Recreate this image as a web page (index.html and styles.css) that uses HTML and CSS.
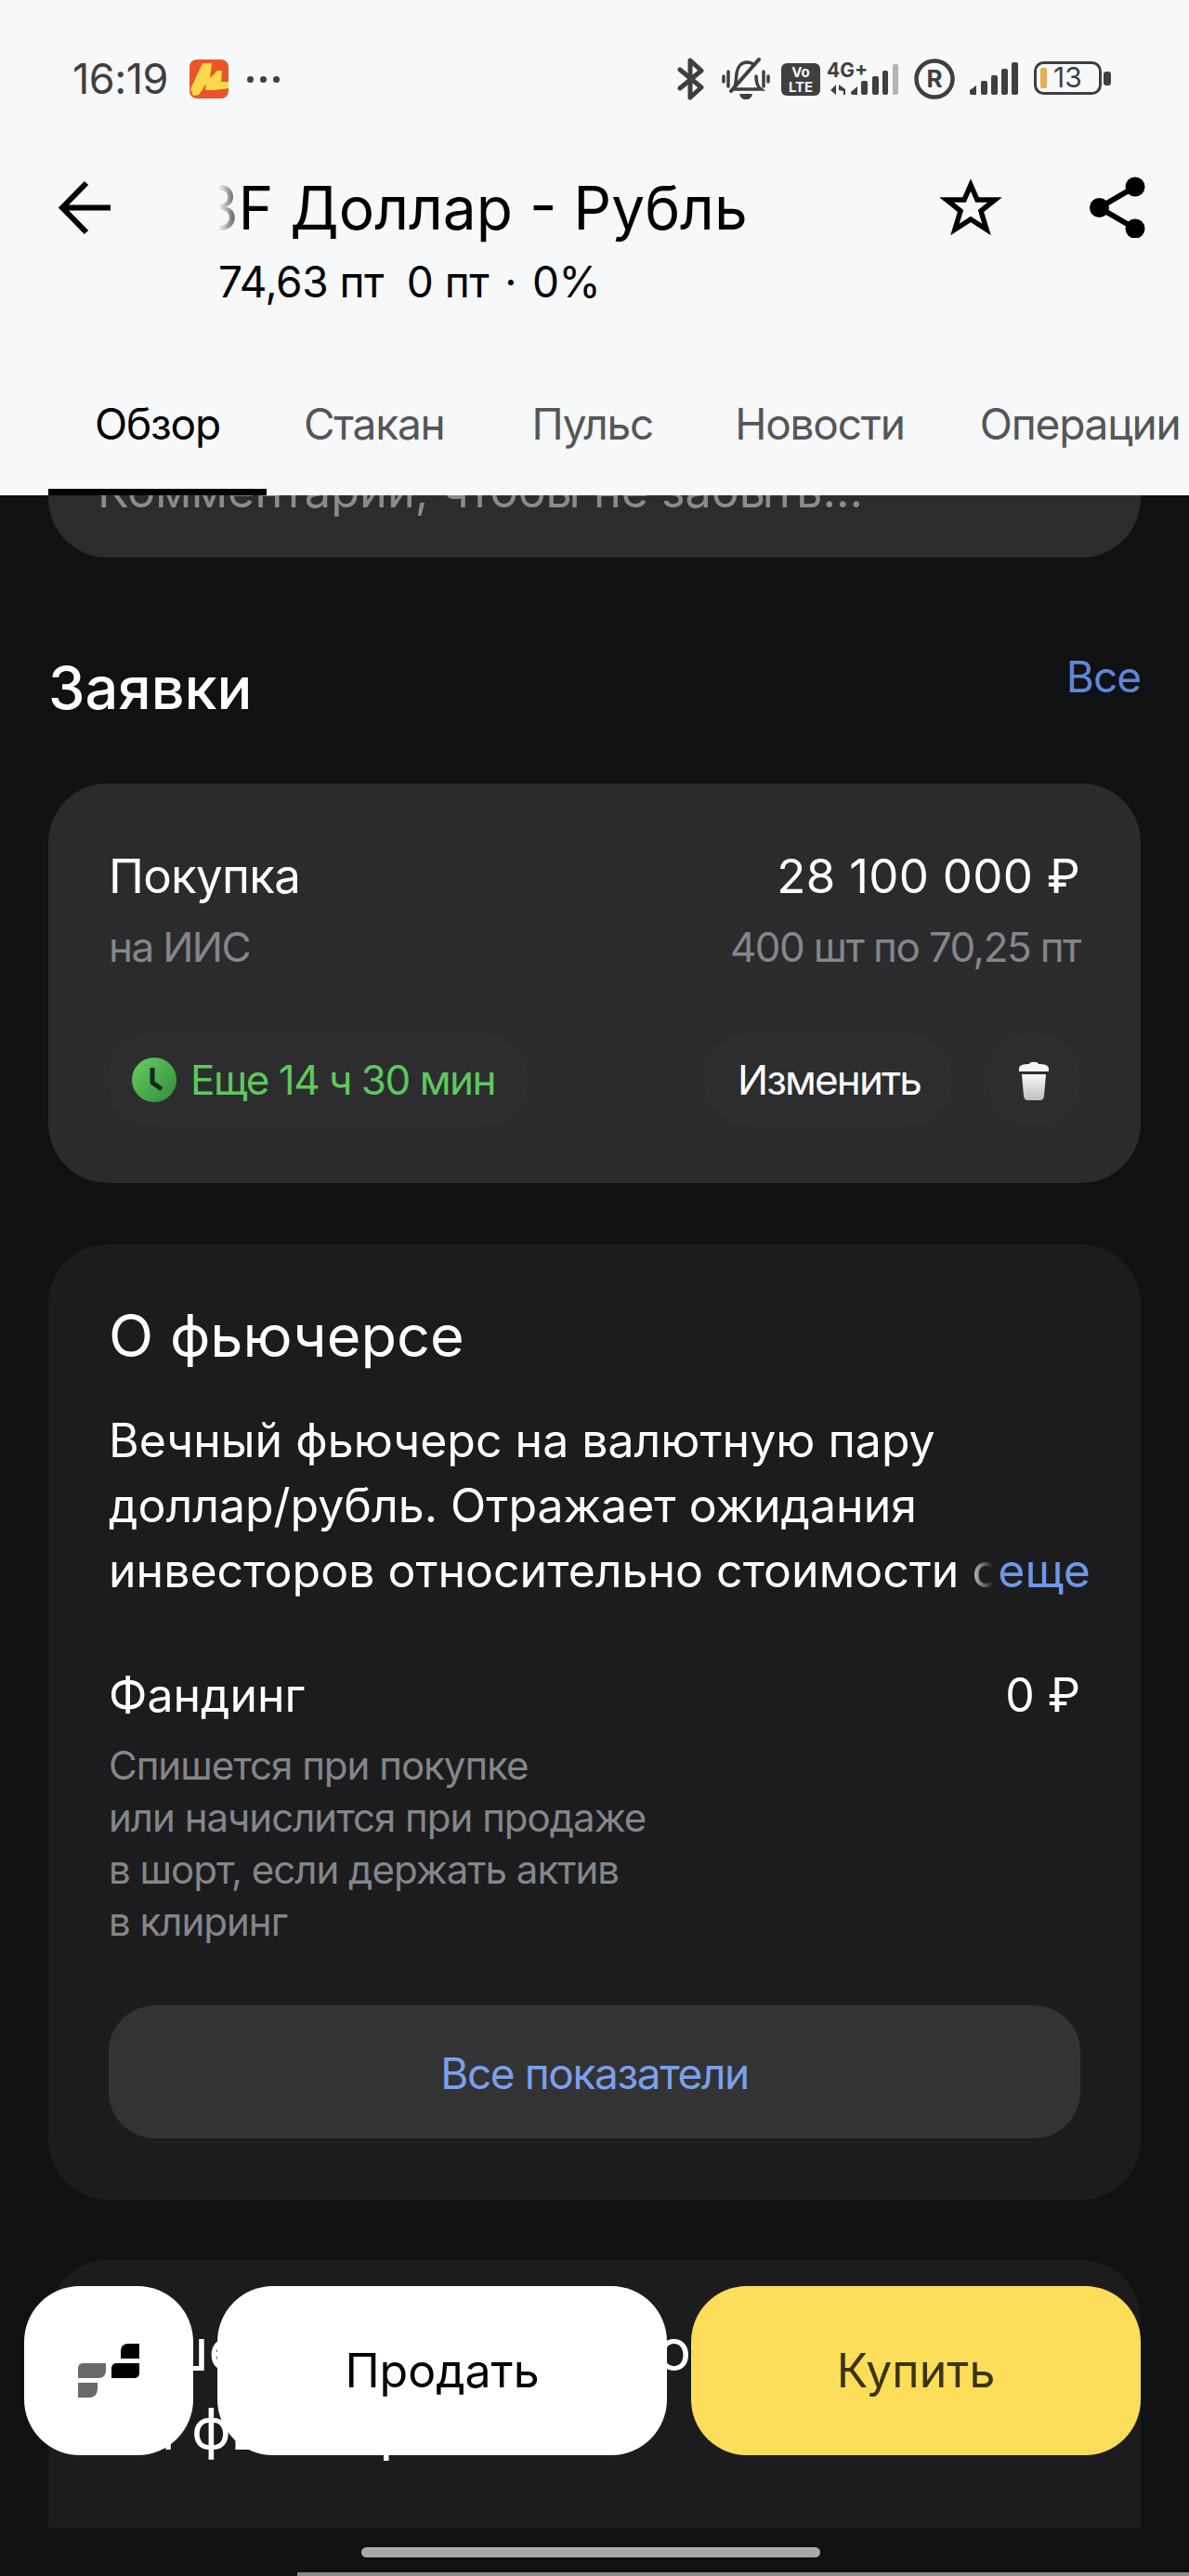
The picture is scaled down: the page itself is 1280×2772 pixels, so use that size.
FILE: index.html
```html
<!DOCTYPE html>
<html lang="ru">
<head>
<meta charset="utf-8">
<title>Доллар – Рубль</title>
<link rel="stylesheet" href="styles.css">
</head>
<body>
<div class="page">
  <header class="header">
    <div class="status">
      <span class="time">16:19</span>
      <svg class="market" width="42" height="42" viewBox="0 0 42 42"><rect width="42" height="42" rx="8" fill="#e9552a"/><path d="M1 32L14 4H24L22 20L30 12H35L34 24H42V31L27 33H17L18 26L10 38L4 39Z" fill="#fcd94a"/></svg>
      <span class="dots"><i></i><i></i><i></i></span>
      <div class="status-right">
        <svg class="i-bt" width="30" height="46" viewBox="0 0 30 46"><path d="M3 13 L26 32 L14 43 V3 L26 14 L3 33" fill="none" stroke="#3f3f3f" stroke-width="5" stroke-linejoin="round" stroke-linecap="round"/></svg>
        <svg class="i-bell" width="52" height="46" viewBox="0 0 52 46"><g fill="none" stroke="#3f3f3f" stroke-linecap="round" stroke-width="3.5"><path d="M2 20v6M7 15v16M45 15v16M50 20v6"/><path d="M12 34c4-4 3-10 4-17 1-7 5-12 11-12 4 0 6 1 8 3M37 20c0 5 1 11 5 14H12"/><path d="M10 36L40 2" stroke-width="4"/></g><path d="M19 39h14c-1 4-3 6-7 6s-6-2-7-6z" fill="#3f3f3f"/></svg>
        <svg class="i-volte" width="42" height="35" viewBox="0 0 42 35"><rect width="42" height="35" rx="6" fill="#3f3f3f"/><text x="21" y="15" class="t-vo">Vo</text><text x="21" y="31" class="t-vo">LTE</text></svg>
        <svg class="i-net" width="78" height="36" viewBox="0 0 78 36"><text x="0" y="16" class="t-4g">4G+</text><g fill="#3f3f3f"><path d="M10 24v11l-6-5zM13 24l7 5v6h-2v-4l-5-1z"/><path d="M26 32l7-6v9h-5a2 2 0 0 1-2-2z"/><rect x="37" y="20" width="7" height="15" rx="2"/><rect x="49" y="15" width="7" height="20" rx="2"/><rect x="60" y="9" width="6" height="26" rx="2"/></g><rect x="71" y="2" width="6" height="33" rx="2" fill="#b4b4b4"/></svg>
        <svg class="i-r" width="44" height="44" viewBox="0 0 44 44"><circle cx="22" cy="22" r="19.5" fill="none" stroke="#3f3f3f" stroke-width="4.5"/><text x="22" y="31" class="t-r">R</text></svg>
        <svg class="i-bars" width="52" height="36" viewBox="0 0 52 36"><g fill="#3f3f3f"><path d="M0 30l7-5v10H2a2 2 0 0 1-2-2z"/><rect x="12" y="20" width="7" height="15" rx="2"/><rect x="23" y="14" width="7" height="21" rx="2"/><rect x="34" y="7" width="7" height="28" rx="2"/><rect x="45" y="0" width="7" height="35" rx="2"/></g></svg>
        <svg class="i-bat" width="84" height="38" viewBox="0 0 84 38"><rect x="1.5" y="1.5" width="70" height="33" rx="9" fill="none" stroke="#3f3f3f" stroke-width="3"/><rect x="7" y="7" width="7" height="22" rx="2" fill="#e5b050"/><text x="21" y="28" class="t-bat">13</text><rect x="75" y="11" width="8" height="15" rx="3" fill="#3f3f3f"/></svg>
      </div>
    </div>
    <div class="toolbar">
      <svg class="back" width="60" height="60" viewBox="0 0 60 60"><path d="M31 3L5 29.500L31 56M5 29.500H57" fill="none" stroke="#000" stroke-width="6"/></svg>
      <div class="titles">
        <div class="title-clip"><h1 class="title">3F Доллар - Рубль</h1></div>
        <div class="quote">74,63 пт&nbsp;&nbsp;0 пт<span class="quote-dot">·</span>0%</div>
      </div>
      <svg class="star" width="66" height="64" viewBox="0 0 66 64"><path d="M33 9L40 25H59L44 37L50 57L33 46L16 57L22 37L7 25H26Z" fill="none" stroke="#000" stroke-width="5.500" stroke-miterlimit="8"/></svg>
      <svg class="share" width="60" height="66" viewBox="0 0 60 66"><circle cx="49" cy="11" r="10.500"/><circle cx="10.500" cy="33.500" r="10.500"/><circle cx="49" cy="56" r="10.500"/><path d="M49 11L10.500 33.500L49 56" fill="none" stroke="#000" stroke-width="6"/></svg>
    </div>
    <nav class="tabs">
      <a class="tab tab-active">Обзор</a>
      <a class="tab">Стакан</a>
      <a class="tab">Пульс</a>
      <a class="tab">Новости</a>
      <a class="tab">Операции</a>
    </nav>
  </header>

  <main class="content">
    <div class="note-card"><p class="note-text">Комментарии, чтобы не забыть...</p></div>

    <div class="section-head">
      <h2 class="section-title">Заявки</h2>
      <a class="link-all">Все</a>
    </div>

    <section class="order-card">
      <div class="order-row">
        <span class="order-main">Покупка</span>
        <span class="order-main order-amount">28 100 000 ₽</span>
      </div>
      <div class="order-row order-row-sub">
        <span class="order-sub">на ИИС</span>
        <span class="order-sub">400 шт по 70,25 пт</span>
      </div>
      <div class="order-actions">
        <div class="pill pill-timer">
          <svg width="48" height="48" viewBox="0 0 48 48"><defs><linearGradient id="clockfill" x1="0" y1="0" x2="1" y2="1"><stop offset="0" stop-color="#68cf62"/><stop offset="1" stop-color="#2f8c3a"/></linearGradient></defs><circle cx="24" cy="24" r="24" fill="url(#clockfill)"/><path d="M22 11V27L32 34" fill="none" stroke="#16261a" stroke-width="5" stroke-linejoin="round"/></svg>
          <span>Еще 14 ч 30 мин</span>
        </div>
        <div class="pill pill-edit">Изменить</div>
        <div class="pill pill-trash">
          <svg width="32" height="44" viewBox="0 0 32 44"><defs><linearGradient id="trashfill" x1="0" y1="0" x2="0" y2="1"><stop offset="0" stop-color="#fafafa"/><stop offset="1" stop-color="#bcbdc0"/></linearGradient></defs><path d="M11 5c0-3 10-3 10 0 6 0 11 1 11 5v3H0v-3c0-4 5-5 11-5z" fill="#f4f4f4"/><path d="M3 16H29L27 39c0 3-2 5-5 5H10c-3 0-5-2-5-5z" fill="url(#trashfill)"/></svg>
        </div>
      </div>
    </section>

    <section class="about-card">
      <h2 class="about-title">О фьючерсе</h2>
      <div class="about-text">
        <p>Вечный фьючерс на валютную пару<br>доллар/рубль. Отражает ожидания<br>инвесторов относительно стоимости о</p>
        <a class="more">еще</a>
      </div>
      <div class="funding-row">
        <span>Фандинг</span>
        <span>0 ₽</span>
      </div>
      <p class="funding-note">Спишется при покупке<br>или начислится при продаже<br>в шорт, если держать актив<br>в клиринг</p>
      <a class="all-metrics">Все показатели</a>
    </section>

    <section class="last-card">
      <h2 class="last-title">Ушедшие покупки о<br>на фьючерс</h2>
    </section>

    <div class="gesture"></div>
    <div class="edge-line"></div>

    <div class="action-bar">
      <div class="btn btn-logo">
        <svg width="66" height="58" viewBox="0 0 66 58"><path d="M6 21H30V28C30 33 28 37 22 37H0V27C0 23 2 21 6 21Z" fill="#6a6a6a"/><path d="M0 42H21V48C21 54 18 58 12 58H0Z" fill="#6a6a6a"/><path d="M42 21H66V31C66 35 64 37 60 37H36V27C36 23 38 21 42 21Z" fill="#000"/><path d="M54 0H66V16H46V8C46 3 49 0 54 0Z" fill="#000"/></svg>
      </div>
      <div class="btn btn-sell">Продать</div>
      <div class="btn btn-buy">Купить</div>
    </div>
  </main>
</div>
</body>
</html>
```
FILE: styles.css
```css
* { box-sizing: border-box; margin: 0; padding: 0; }
html, body { width: 1280px; height: 2772px; overflow: hidden; background: #101112; }
body { font-family: Inter, Roboto, "Liberation Sans", sans-serif; }
.page { width: 1280px; height: 2772px; display: flex; flex-direction: column; overflow: hidden; }

.header { height: 533px; flex: none; background: #f7f8fa; display: flex; flex-direction: column; }

.status { height: 170px; display: flex; align-items: center; padding: 0 83px 0 78px; color: #3f3f3f; }
.time { font-size: 45px; line-height: 46px; letter-spacing: -0.5px; width: 126px; flex: none; }
.market { flex: none; }
.dots { display: flex; gap: 7px; margin-left: 20px; }
.dots i { width: 7px; height: 7px; border-radius: 50%; background: #3f3f3f; }
.status-right { margin-left: auto; display: flex; align-items: center; }
.i-bell { margin-left: 18px; }
.i-volte { margin-left: 12px; }
.i-net { margin-left: 7px; }
.i-r { margin-left: 16px; }
.i-bars { margin-left: 16px; }
.i-bat { margin-left: 17px; }
.t-vo { font: 700 15px Inter, sans-serif; fill: #f7f8fa; text-anchor: middle; }
.t-4g { font: 700 21px Inter, sans-serif; fill: #3f3f3f; }
.t-r { font: 700 26px Inter, sans-serif; fill: #3f3f3f; text-anchor: middle; }
.t-bat { font: 400 30px Inter, sans-serif; fill: #3f3f3f; }

.toolbar { height: 180px; display: flex; align-items: flex-start; padding: 0 48px 0 62px; }
.back { flex: none; margin-top: 24px; }
.titles { margin-left: 113px; width: 620px; flex: none; }
.title-clip { overflow: hidden; position: relative; height: 100px; }
.title-clip::after { content: ""; position: absolute; left: 0; top: 0; bottom: 0; width: 30px; background: linear-gradient(90deg, #f7f8fa, rgba(247,248,250,0)); }
.title { font-size: 64px; line-height: 100px; font-weight: 400; color: #000; white-space: nowrap; margin-left: -18px; margin-top: 4px; }
.quote { font-size: 46px; line-height: 56px; letter-spacing: -0.5px; color: #000; white-space: nowrap; margin-top: 5px; }
.quote-dot { margin: 0 17px; }
.star { flex: none; margin: 20px 0 0 157px; }
.share { flex: none; margin: 20px 0 0 95px; }

.tabs { flex: 1; display: flex; align-items: stretch; padding-left: 52px; white-space: nowrap; overflow: hidden; }
.tab { font-size: 46px; line-height: 56px; letter-spacing: -1.2px; color: #555658; padding: 78px 0 0; margin-left: 90px; flex: none; }
.tab:first-child { margin-left: 0; }
.tab:nth-child(3) { margin-left: 94px; }
.tab:nth-child(4) { margin-left: 88px; }
.tab:nth-child(5) { margin-left: 81px; }
.tab-active { color: #000; padding: 78px 50px 0; border-bottom: 7px solid #000; margin-right: -50px; }

.content { flex: 1; position: relative; padding: 0 52px; display: flex; flex-direction: column; overflow: hidden; }

.note-card { height: 67px; flex: none; background: #2c2c2e; border-radius: 0 0 64px 64px; overflow: hidden; padding: 0 53px; }
.note-text { font-size: 50.5px; line-height: 56px; color: #8a8b8d; margin-top: -33px; white-space: nowrap; }

.section-head { display: flex; justify-content: space-between; align-items: flex-start; margin-top: 100px; height: 143px; }
.section-title { font-size: 63px; line-height: 80px; font-weight: 500; color: #fff; }
.link-all { font-size: 46px; line-height: 56px; letter-spacing: -1px; color: #5d86dc; }

.order-card { height: 430px; flex: none; background: #2b2b2d; border-radius: 64px; padding: 70px 65px 0 65px; }
.order-row { display: flex; justify-content: space-between; }
.order-main { font-size: 51px; line-height: 60px; letter-spacing: -0.7px; color: #fff; }
.order-amount { letter-spacing: 0.3px; }
.order-row-sub { margin-top: 19px; }
.order-sub { font-size: 44px; line-height: 54px; letter-spacing: -1.6px; color: #85868a; }
.order-actions { display: flex; align-items: center; margin-top: 64px; }
.pill { height: 103px; border-radius: 52px; background: #2d2d2f; display: flex; align-items: center; font-size: 44px; letter-spacing: -1.5px; flex: none; }
.pill-timer { width: 453px; margin-left: -1px; padding-left: 26px; gap: 15px; color: #5cc95c; }
.pill-edit { width: 268px; margin-left: auto; padding-left: 37px; letter-spacing: -1.9px; color: #fff; }
.pill-trash { width: 100px; margin-left: 38px; justify-content: center; }

.about-card { margin-top: 66px; height: 1028px; flex: none; background: #1c1c1e; border-radius: 64px; padding: 58px 65px 0 65px; }
.about-title { font-size: 63px; line-height: 80px; font-weight: 400; color: #fff; }
.about-text { position: relative; margin-top: 38px; height: 210px; font-size: 50px; line-height: 70px; color: #fff; white-space: nowrap; }
.more { position: absolute; right: -11px; bottom: 0; width: 135px; text-align: right; color: #6f96e8; background: linear-gradient(90deg, rgba(28,28,30,0) 0, #1c1c1e 30px); }
.funding-row { display: flex; justify-content: space-between; margin-top: 69px; font-size: 50px; line-height: 60px; color: #fff; }
.funding-note { margin-top: 18px; font-size: 42px; line-height: 56px; letter-spacing: -1px; color: #85868a; }
.all-metrics { display: block; margin-top: 62px; height: 143px; border-radius: 50px; background: #333335; color: #7ca0ea; font-size: 46px; letter-spacing: -1.4px; line-height: 147px; text-align: center; }

.last-card { margin-top: 65px; height: 288px; flex: none; background: #1c1c1e; border-radius: 64px 64px 0 0; padding: 54px 0 0 65px; overflow: hidden; }
.last-title { font-size: 62px; line-height: 85px; font-weight: 400; color: #fff; white-space: nowrap; text-indent: 20px; }

.gesture { margin: 21px 0 0 337px; width: 494px; height: 11px; border-radius: 6px; background: #a9a9a9; flex: none; }
.edge-line { margin: 16px -52px 0 268px; height: 4px; background: #8a8a8a; flex: none; }

.action-bar { position: absolute; left: 26px; top: 1927px; display: flex; gap: 26px; }
.btn { height: 182px; border-radius: 60px; display: flex; align-items: center; justify-content: center; font-size: 50px; flex: none; }
.btn-logo { width: 182px; background: #fff; }
.btn-sell { width: 484px; background: #fff; color: #000; }
.btn-buy { width: 484px; background: #fcdd5a; color: #3a3510; }
```
